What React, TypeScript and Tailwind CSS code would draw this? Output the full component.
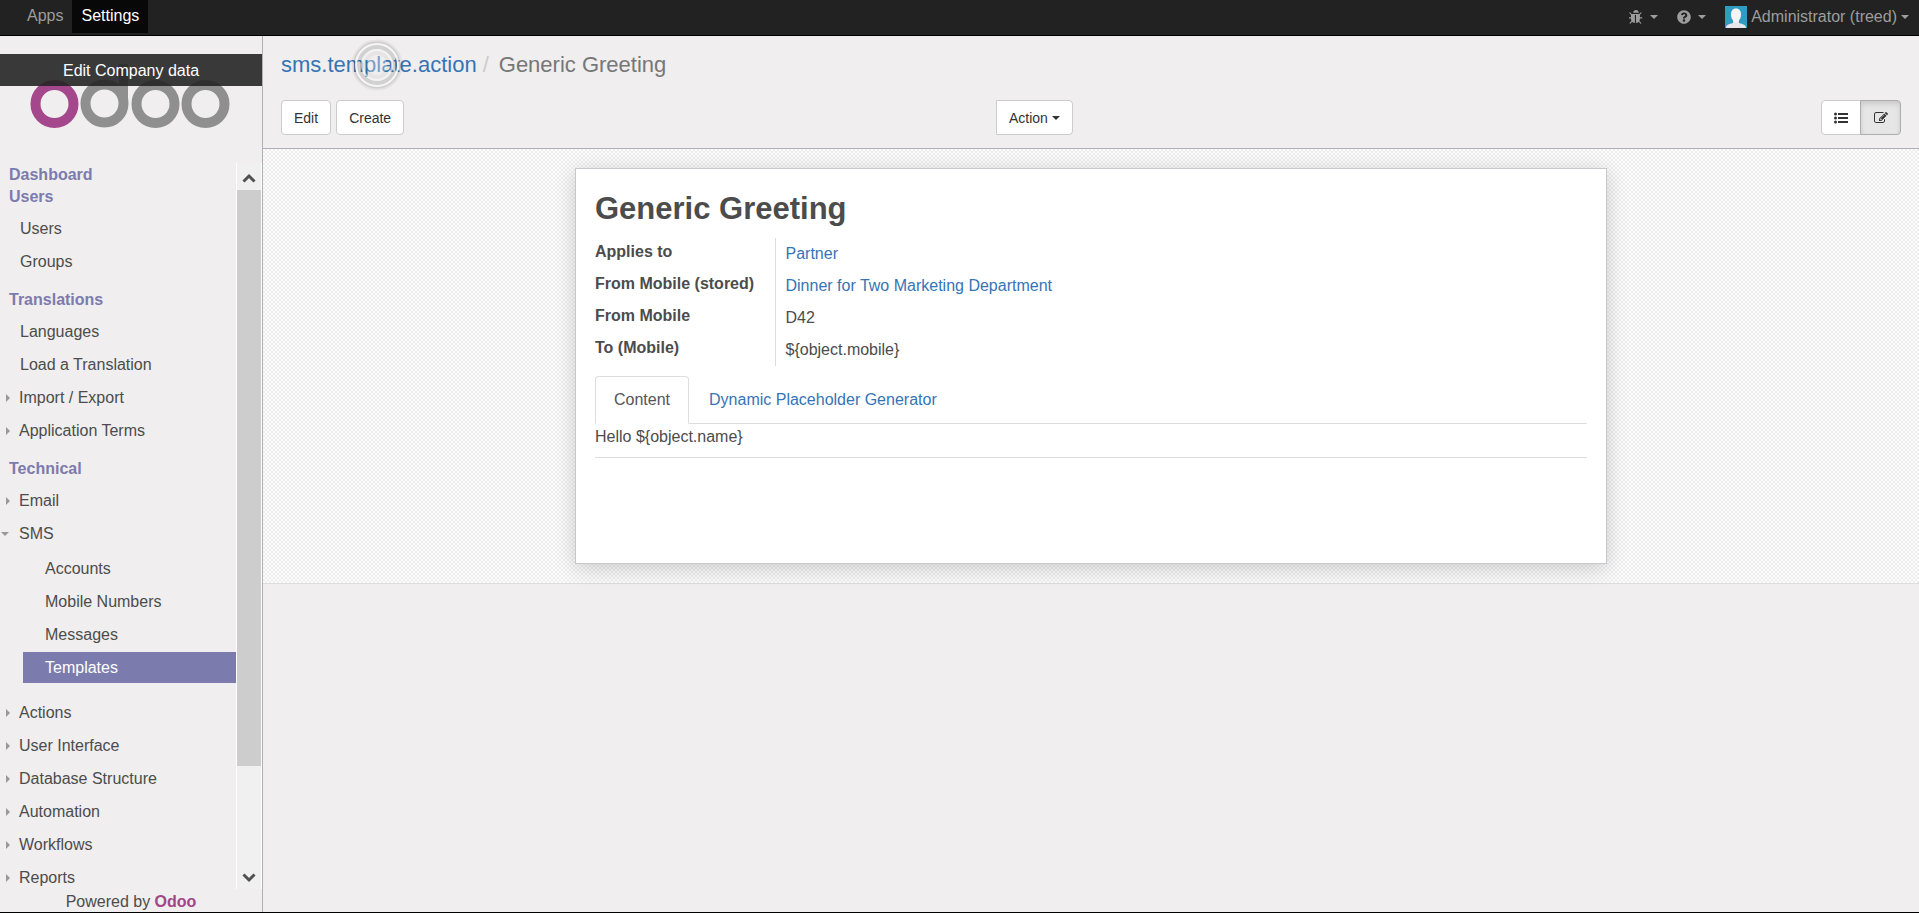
import type { ReactNode } from "react";
import { FaQuestionCircle } from "react-icons/fa";

function Caret({ className }: { className: string }) {
  return (
    <svg viewBox="0 0 8 4" className={`h-1 w-2 ${className}`} fill="currentColor" aria-hidden="true">
      <path d="M0 0H8L4 4Z" />
    </svg>
  );
}

function Bug() {
  return (
    <svg viewBox="96 64 1600 1600" className="size-[14px]" fill="currentColor" aria-hidden="true">
      <path d="M1632 960q0 26-19 45t-45 19h-224q0 171-67 290l208 209q19 19 19 45t-19 45q-18 19-45 19t-45-19l-198-197q-5 5-15 13t-42 28.500-65 36.500-82 29-97 13v-896h-128v896q-51 0-101.500-13.500t-87-33-66-39-43.500-32.500l-15-14-183 207q-20 21-48 21-24 0-43-16-19-18-20.500-44.500t15.500-46.500l202-227q-58-114-58-274h-224q-26 0-45-19t-19-45 19-45 45-19h224v-294l-173-173q-19-19-19-45t19-45 45-19 45 19l173 173h844l173-173q19-19 45-19t45 19 19 45-19 45l-173 173v294h224q26 0 45 19t19 45zM1216 384h-640q0-133 93.500-226.500t226.500-93.500 226.500 93.500 93.500 226.500z" />
    </svg>
  );
}

function ListIcon() {
  return (
    <svg viewBox="0 0 14 14" className="size-[14px]" fill="currentColor" aria-hidden="true">
      <circle cx="1.500" cy="3" r="1.500" />
      <circle cx="1.500" cy="7" r="1.500" />
      <circle cx="1.500" cy="11" r="1.500" />
      <path d="M4 2H14V4H4ZM4 6H14V8H4ZM4 10H14V12H4Z" />
    </svg>
  );
}

function EditSquare() {
  return (
    <svg viewBox="0 0 1792 1792" className="size-[14px]" fill="currentColor" aria-hidden="true">
      <path d="M888 1184l116-116-152-152-116 116v56h96v96h56zM1328 464q-16-16-33 1l-350 350q-17 17-1 33t33-1l350-350q17-17 1-33zM1408 1058v190q0 119-84.500 203.500t-203.500 84.500h-832q-119 0-203.500-84.500t-84.500-203.500v-832q0-119 84.500-203.500t203.500-84.500h832q63 0 117 25 15 7 18 23 3 17-9 29l-49 49q-14 14-32 8-23-6-45-6h-832q-66 0-113 47t-47 113v832q0 66 47 113t113 47h832q66 0 113-47t47-113v-126q0-13 9-22l64-64q15-15 35-7t20 29zM1312 320l288 288-672 672h-288v-288zM1756 452l-92 92-288-288 92-92q28-28 68-28t68 28l152 152q28 28 28 68t-28 68z" />
    </svg>
  );
}

function Avatar() {
  return (
    <svg viewBox="0 0 22 22" className="size-[22px]" aria-hidden="true">
      <rect width="22" height="22" fill="#2f9dbf" />
      <path d="M1 22C1 19 4 18 8 17V14H14V17C18 18 21 19 21 22Z" fill="#e8e8ec" />
      <path d="M11 2.500C14.500 2.500 16 5 16 8.500S14 16 11 16 6 12 6 8.500 7.500 2.500 11 2.500Z" fill="#f4f4f6" />
    </svg>
  );
}

function Logo() {
  return (
    <svg viewBox="0 0 202 64" className="h-16 w-[202px]" fill="none" strokeWidth="10" role="img" aria-label="Odoo">
      <path d="M93.500 0V40" stroke="#8f8f8f" strokeWidth="9" />
      <circle cx="24.500" cy="40" r="19" stroke="#a5478c" />
      <circle cx="74.500" cy="39.500" r="19" stroke="#8f8f8f" />
      <circle cx="125.500" cy="40" r="19" stroke="#8f8f8f" />
      <circle cx="175.500" cy="40" r="19" stroke="#8f8f8f" />
    </svg>
  );
}

function Heading({ children }: { children: ReactNode }) {
  return <h2 className="h-[22px] px-[9px] font-bold leading-[22px] text-[#7c7bad]">{children}</h2>;
}

function Item({ label, state }: { label: string; state?: "closed" | "open" }) {
  return (
    <li>
      <a href="#" className="flex h-[33px] items-center">
        <span className={`shrink-0 text-[#999] ${state ? "w-[19px]" : "w-5"}`}>
          {state === "closed" && (
            <svg viewBox="0 0 4 8" className="ml-1.5 h-2 w-1" fill="currentColor" aria-hidden="true">
              <path d="M0 0L4 4L0 8Z" />
            </svg>
          )}
          {state === "open" && <Caret className="ml-px" />}
        </span>
        {label}
      </a>
    </li>
  );
}

function SubItem({ label, active }: { label: string; active?: boolean }) {
  return (
    <li className="py-px">
      <a
        href="#"
        className={`ml-[23px] flex h-[31px] items-center pl-[22px] ${active ? "bg-[#7c7bad] text-white" : ""}`}
      >
        {label}
      </a>
    </li>
  );
}

function Sidebar() {
  return (
    <aside className="flex w-[263px] shrink-0 flex-col border-r border-[#afafb6]">
      <div className="relative flex h-[127px] shrink-0 justify-center pt-7">
        <Logo />
        <a
          href="#"
          className="absolute inset-x-0 top-[18px] h-8 bg-[#252525]/90 text-center leading-[34px] text-white"
        >
          Edit Company data
        </a>
      </div>
      <div className="flex min-h-0 flex-1">
        <nav className="min-w-0 flex-1 overflow-hidden pt-px">
          <Heading>Dashboard</Heading>
          <Heading>Users</Heading>
          <ul className="mt-1 mb-[11px]">
            <Item label="Users" />
            <Item label="Groups" />
          </ul>
          <Heading>Translations</Heading>
          <ul className="mt-1 mb-[11px]">
            <Item label="Languages" />
            <Item label="Load a Translation" />
            <Item label="Import / Export" state="closed" />
            <Item label="Application Terms" state="closed" />
          </ul>
          <Heading>Technical</Heading>
          <ul className="mt-1">
            <Item label="Email" state="closed" />
            <Item label="SMS" state="open" />
            <li>
              <ul className="mt-0.5 mb-3">
                <SubItem label="Accounts" />
                <SubItem label="Mobile Numbers" />
                <SubItem label="Messages" />
                <SubItem label="Templates" active />
              </ul>
            </li>
            <Item label="Actions" state="closed" />
            <Item label="User Interface" state="closed" />
            <Item label="Database Structure" state="closed" />
            <Item label="Automation" state="closed" />
            <Item label="Workflows" state="closed" />
            <Item label="Reports" state="closed" />
          </ul>
        </nav>
        <div className="flex w-[26px] shrink-0 flex-col border-x border-white bg-[#f0f0f0] text-[#505050]" aria-hidden="true">
          <svg viewBox="0 0 24 27" className="h-[27px] w-6 shrink-0" fill="none" stroke="currentColor" strokeWidth="3">
            <path d="M6.500 18.500L12 13L17.500 18.500" />
          </svg>
          <div className="flex-[576] bg-[#cdcdcd]" />
          <div className="flex-[96]" />
          <svg viewBox="0 0 24 27" className="h-[27px] w-6 shrink-0" fill="none" stroke="currentColor" strokeWidth="3">
            <path d="M6.500 12.500L12 18L17.500 12.500" />
          </svg>
        </div>
      </div>
      <footer className="h-[23px] shrink-0 text-center leading-[25px]">
        Powered by{" "}
        <a href="#" className="font-bold text-[#a24689]">
          Odoo
        </a>
      </footer>
    </aside>
  );
}

const fields = [
  { label: "Applies to", value: "Partner", link: true },
  { label: "From Mobile (stored)", value: "Dinner for Two Marketing Department", link: true },
  { label: "From Mobile", value: "D42", link: false },
  { label: "To (Mobile)", value: "${object.mobile}", link: false },
];

function Sheet() {
  return (
    <div className="border-b border-[#ddd] bg-[#fafafa] bg-[conic-gradient(#eeeeee_25%,#fcfcfc_0_50%,#eeeeee_0_75%,#fcfcfc_0)] bg-size-[4px_4px] bg-clip-padding px-4 py-[19px]">
      <article className="mx-auto min-h-[396px] max-w-[1032px] border border-[#c8c8cc] bg-white px-[19px] pt-5 shadow-[0_4px_20px_rgba(0,0,0,0.18)]">
        <h1 className="text-[31px] font-bold leading-10">Generic Greeting</h1>
        <table className="mt-[9px]">
          <tbody>
            {fields.map((f) => (
              <tr key={f.label} className="h-8">
                <th scope="row" className="w-[180px] border-r border-[#ddd] pb-[5px] text-left font-bold leading-5">
                  {f.label}
                </th>
                <td className="pl-2.5 leading-5">
                  {f.link ? (
                    <a href="#" className="text-[#3674b5]">
                      {f.value}
                    </a>
                  ) : (
                    f.value
                  )}
                </td>
              </tr>
            ))}
          </tbody>
        </table>
        <div role="tablist" className="mt-2.5 flex gap-0.5 border-b border-[#ddd]">
          <button
            role="tab"
            aria-selected="true"
            className="-mb-px h-12 rounded-t border border-b-white border-[#ddd] bg-white px-[18px] text-[#555]"
          >
            Content
          </button>
          <button role="tab" aria-selected="false" className="h-[47px] px-[18px] text-[#3674b5]">
            Dynamic Placeholder Generator
          </button>
        </div>
        <p className="h-[34px] border-b border-[#ddd] pt-[3px] leading-5">{"Hello ${object.name}"}</p>
      </article>
    </div>
  );
}

export default function App() {
  return (
    <div className="flex h-screen flex-col border-b border-black bg-[#f0eeee] font-['Liberation_Sans',Arial,sans-serif] text-base text-[#4c4c4c]">
      <header className="flex h-9 shrink-0 justify-between border-b border-black bg-[#222] text-[#9d9d9d]">
        <nav className="flex h-[33px] pl-[18px] leading-[31px]">
          <a href="#" className="px-[9px]">
            Apps
          </a>
          <a href="#" className="bg-[#080808] px-[9px] text-white">
            Settings
          </a>
        </nav>
        <div className="flex h-[33px] items-center pr-2.5">
          <button className="flex items-center" aria-label="Debug">
            <Bug />
            <Caret className="ml-[7px]" />
          </button>
          <button className="ml-[19px] flex items-center" aria-label="Help">
            <FaQuestionCircle className="size-[14px]" />
            <Caret className="ml-[7px]" />
          </button>
          <button className="ml-[19px] flex items-center">
            <Avatar />
            <span className="ml-1">Administrator (treed)</span>
            <Caret className="ml-1" />
          </button>
        </div>
      </header>
      <div className="flex min-h-0 flex-1">
        <Sidebar />
        <main className="min-w-0 flex-1">
          <div className="border-b border-[#afafb6] px-[18px] pb-[13px]">
            <div className="relative flex h-16 text-[22px] leading-[58px]">
              <a href="#" className="text-[#3674b5]">
                sms.template.action
              </a>
              <span className="ml-1.5 text-[#ccc]">/</span>
              <span className="ml-2.5 text-[#777]">Generic Greeting</span>
              <svg viewBox="0 0 56 56" className="pointer-events-none absolute top-px left-[68px] size-14" fill="none" aria-hidden="true">
                <circle cx="28" cy="28" r="24" stroke="#000" strokeOpacity="0.05" strokeWidth="3" />
                <circle cx="28" cy="28" r="22.500" stroke="#000" strokeOpacity="0.1" strokeWidth="2" />
                <circle cx="28" cy="28" r="18" stroke="#000" strokeOpacity="0.12" strokeWidth="4" />
                <circle cx="28" cy="28" r="12" stroke="#000" strokeOpacity="0.04" strokeWidth="4" />
                <circle cx="28" cy="28" r="21" stroke="#f6f6f6" strokeOpacity="0.9" strokeWidth="2" />
                <circle cx="28" cy="28" r="15" stroke="#f6f6f6" strokeOpacity="0.6" strokeWidth="2" />
                <circle cx="28" cy="28" r="10" fill="#f0eeee" fillOpacity="0.35" />
              </svg>
            </div>
            <div className="grid grid-cols-[715fr_905fr] text-sm text-[#333]">
              <div className="flex gap-[5px]">
                <button className="h-[35px] rounded border border-[#ccc] bg-white px-3">Edit</button>
                <button className="h-[35px] rounded border border-[#ccc] bg-white px-3">Create</button>
              </div>
              <div className="flex justify-between">
                <button className="flex h-[35px] items-center rounded-r border border-[#ccc] bg-white px-3">
                  Action <Caret className="ml-1" />
                </button>
                <div className="flex">
                  <button
                    className="flex h-[35px] w-10 items-center justify-center rounded-l border border-[#ccc] bg-white"
                    aria-label="List view"
                  >
                    <ListIcon />
                  </button>
                  <button
                    className="-ml-px flex h-[35px] w-[41px] items-center justify-center rounded-r border border-[#adadad] bg-[#e6e6e6] shadow-[inset_0_3px_5px_rgba(0,0,0,0.125)]"
                    aria-label="Form view"
                    aria-pressed="true"
                  >
                    <EditSquare />
                  </button>
                </div>
              </div>
            </div>
          </div>
          <Sheet />
        </main>
      </div>
    </div>
  );
}
